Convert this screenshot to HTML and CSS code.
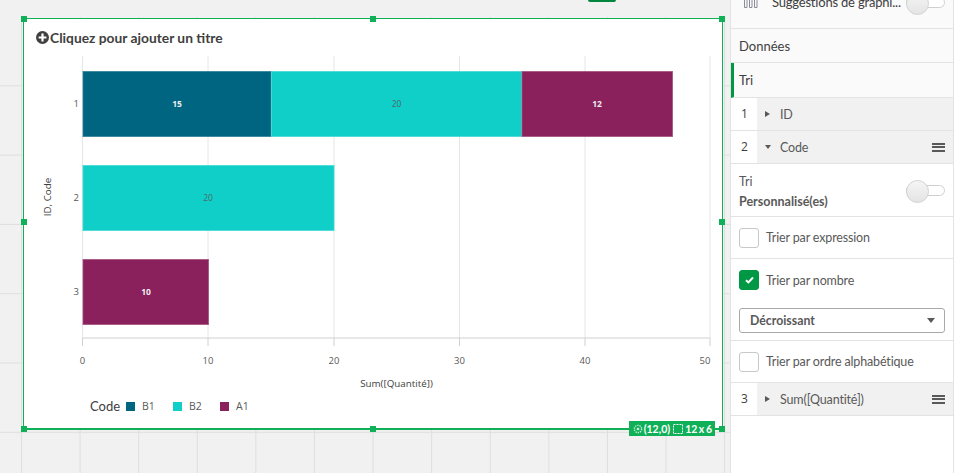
FILE: index.html
```html
<!DOCTYPE html>
<html lang="fr">

<head>
    <meta charset="UTF-8">
    <title>Tri</title>
    <link rel="stylesheet" href="styles.css">
</head>

<body>

    <main class="canvas">
        <div class="top-btn"></div>

        <section class="frame">
            <span class="handle h-tl"></span>
            <span class="handle h-tc"></span>
            <span class="handle h-tr"></span>
            <span class="handle h-ml"></span>
            <span class="handle h-mr"></span>
            <span class="handle h-bl"></span>
            <span class="handle h-bc"></span>
            <span class="handle h-br"></span>

            <h1 class="title">
                <svg class="title-icon" width="13" height="13" viewBox="0 0 13 13">
                    <circle cx="6.5" cy="6.5" r="6.5" fill="#404040" />
                    <path d="M5.4 2.6h2.2v2.8h2.8v2.2H7.6v2.8H5.4V7.6H2.6V5.4h2.8z" fill="#fff" />
                </svg>
                Cliquez pour ajouter un titre
            </h1>

            <svg class="plot" width="698" height="342" viewBox="24 50 698 342">
                <g class="grid-lines">
                    <path d="M82.5 56V338M208 56V338M334 56V338M459.500 56V338M585 56V338M710 56V338" />
                </g>

                <rect class="bar b1" x="83" y="71.500" width="188" height="65" />
                <rect class="bar b2" x="271.500" y="71.500" width="250" height="65" />
                <rect class="bar a1" x="522" y="71.500" width="150.500" height="65" />
                <rect class="bar b2" x="83" y="165.500" width="251" height="65" />
                <rect class="bar a1" x="83" y="259.500" width="125.500" height="65" />

                <text class="val light" x="177" y="107">15</text>
                <text class="val dark" x="396.500" y="107">20</text>
                <text class="val light" x="597" y="107">12</text>
                <text class="val dark" x="208" y="201">20</text>
                <text class="val light" x="146" y="295">10</text>

                <path class="axis" d="M82.500 338H710M82.500 338v8M208 338v8M334 338v8M459.500 338v8M585 338v8M710 338v8" />

                <text class="tick end" x="79" y="107">1</text>
                <text class="tick end" x="79" y="201">2</text>
                <text class="tick end" x="79" y="295">3</text>

                <text class="tick" x="82.500" y="364">0</text>
                <text class="tick" x="208" y="364">10</text>
                <text class="tick" x="334" y="364">20</text>
                <text class="tick" x="459.500" y="364">30</text>
                <text class="tick" x="585" y="364">40</text>
                <text class="tick" x="705" y="364">50</text>

                <text class="axis-title" x="396.500" y="387">Sum([Quantité])</text>
                <text class="axis-title" transform="translate(51 197) rotate(-90)">ID, Code</text>
            </svg>

            <div class="legend">
                <span class="legend-title">Code</span>
                <span class="legend-item"><i class="swatch b1"></i>B1</span>
                <span class="legend-item"><i class="swatch b2"></i>B2</span>
                <span class="legend-item"><i class="swatch a1"></i>A1</span>
            </div>

            <div class="badge">
                <svg class="badge-pos" width="10" height="10" viewBox="0 0 11 11">
                    <circle cx="5.500" cy="5.500" r="4" fill="none" stroke="#cdeedb" stroke-width="1.500" stroke-dasharray="1.500 1" />
                    <circle cx="5.500" cy="5.500" r="1.500" fill="#cdeedb" />
                </svg>
                <span>(12,0)</span>
                <svg class="badge-size" width="10" height="10" viewBox="0 0 10 10">
                    <rect x="0.500" y="0.500" width="9" height="9" fill="none" stroke="#fff" stroke-dasharray="2 1" />
                </svg>
                <span class="badge-dim">12 x 6</span>
            </div>
        </section>
    </main>

    <aside class="panel">
        <div class="suggest">
            <svg class="suggest-icon" width="16" height="10" viewBox="0 0 16 10">
                <path d="M1.500 0V8.500H4V0M6.500 0V8.500H9V0M11.500 0V8.500H14V0" fill="none" stroke="#8a8a9a" stroke-width="1" />
            </svg>
            <span class="suggest-text">Suggestions de graphi...</span>
            <span class="toggle"></span>
        </div>

        <div class="row-head">Données</div>
        <div class="row-head active">Tri</div>

        <div class="sort-row">
            <span class="num">1</span>
            <div class="sort-body"><i class="caret right"></i>ID</div>
        </div>
        <div class="sort-row">
            <span class="num">2</span>
            <div class="sort-body"><i class="caret down"></i>Code<span class="burger"></span></div>
        </div>

        <div class="option tri-opt">
            <div>
                <div class="tri-label">Tri</div>
                <div class="tri-value">Personnalisé(es)</div>
            </div>
            <span class="toggle"></span>
        </div>

        <div class="option check-opt">
            <span class="check"></span>Trier par expression
        </div>

        <div class="option number-opt">
            <div class="check-line">
                <span class="check on">
                    <svg width="9" height="8" viewBox="0 0 9 8">
                        <path d="M1 4.200L3.400 6.400L8 1.500" fill="none" stroke="#fff" stroke-width="2" />
                    </svg>
                </span>Trier par nombre
            </div>
            <div class="select">Décroissant<i class="caret down big"></i></div>
        </div>

        <div class="option check-opt">
            <span class="check"></span>Trier par ordre alphabétique
        </div>

        <div class="sort-row">
            <span class="num">3</span>
            <div class="sort-body"><i class="caret right"></i>Sum([Quantité])<span class="burger"></span></div>
        </div>
    </aside>

</body>

</html>
```

FILE: styles.css
```css
* {
    box-sizing: border-box;
    margin: 0;
    padding: 0;
}

html,
body {
    height: 100%;
    overflow: hidden;
}

body {
    display: grid;
    grid-template-columns: 730px 224px;
    height: 473px;
    background: #fff;
    font-family: Lato, "Open Sans", sans-serif;
    font-size: 13px;
    color: #404040;
}

.canvas {
    position: relative;
    padding: 18px 7px 0 23px;
    background-color: #f1f1f1;
}

/* the sheet grid, it only starts just above the object */
.canvas::before {
    content: '';
    position: absolute;
    top: 17px;
    left: 0;
    right: 0;
    bottom: 0;
    background-image:
        linear-gradient(to right, #dedede 1px, transparent 1px),
        linear-gradient(to top, #dedede 1px, transparent 1px);
    background-size: 58.6px 69.3px;
    background-position: 21px 0;
}

.top-btn {
    position: absolute;
    top: 0;
    left: 588px;
    width: 28px;
    height: 2px;
    background: #00873d;
    border-radius: 0 0 4px 4px;
}

.frame {
    position: relative;
    height: 412px;
    background: #fff;
    border: 1px solid #0fb057;
    border-bottom-width: 2px;
}

.handle {
    position: absolute;
    width: 6px;
    height: 6px;
    background: #0fb057;
}

.h-tl { top: -3px; left: -3px; }
.h-tc { top: -3px; left: 346px; }
.h-tr { top: -3px; right: -3px; }
.h-ml { top: 200px; left: -3px; }
.h-mr { top: 200px; right: -3px; }
.h-bl { bottom: -4px; left: -3px; }
.h-bc { bottom: -4px; left: 346px; }
.h-br { bottom: -4px; right: -3px; }

.title {
    display: flex;
    align-items: center;
    gap: 1px;
    height: 31px;
    padding: 5px 0 0 12px;
    font-size: 13.800px;
    font-weight: 700;
    color: #404040;
}

.plot {
    display: block;
}

.grid-lines path {
    stroke: #e6e6e6;
    fill: none;
}

.axis {
    stroke: #d0d0d0;
    fill: none;
}

.bar {
    stroke-width: 1;
    stroke-opacity: 0.75;
}

.bar.b1 { fill: #006580; stroke: #2a8097; }
.bar.b2 { fill: #10cfc9; stroke: #3fd8d3; }
.bar.a1 { fill: #8a205c; stroke: #a04c7c; }

.plot text {
    font-family: "Open Sans", sans-serif;
    text-anchor: middle;
}

.val {
    font-size: 8.500px;
}

.val.light {
    fill: #eee;
    font-weight: 700;
}

.val.dark {
    fill: #4a6a68;
}

.tick {
    font-size: 9.500px;
    fill: #595959;
}

.plot .tick.end {
    text-anchor: end;
}

.axis-title {
    font-size: 9.800px;
    fill: #404040;
}

.legend {
    display: flex;
    align-items: center;
    padding-left: 66px;
    height: 28px;
    color: #595959;
}

.legend-title {
    margin-right: 6px;
    font-size: 13px;
    color: #404040;
}

.legend-item {
    display: flex;
    align-items: center;
    width: 47px;
    font-family: "Open Sans", sans-serif;
    font-size: 10.500px;
}

.swatch {
    width: 9px;
    height: 9px;
    margin-right: 7px;
}

.swatch.b1 { background: #006580; }
.swatch.b2 { background: #10cfc9; }
.swatch.a1 { background: #8a205c; }

.badge {
    position: absolute;
    right: 7px;
    bottom: -8px;
    display: flex;
    align-items: center;
    height: 15px;
    padding: 0 3px 0 4px;
    background: #0fb057;
    color: #fff;
    font-size: 10.500px;
    font-weight: 700;
    word-spacing: -1px;
}

.badge-pos {
    margin-right: 1px;
}

.badge-size {
    margin: 0 2px 0 3px;
}

/* right side properties */
.panel {
    background: #fff;
    border-left: 1px solid #e3e3e3;
    border-right: 1px solid #e3e3e3;
}

.suggest {
    display: flex;
    align-items: flex-end;
    height: 29px;
    padding: 0 8px 19px 12px;
    overflow: hidden;
    background: #fafafa;
    border-bottom: 1px solid #e3e3e3;
}

.suggest-icon {
    flex: none;
    margin-right: 13px;
}

.suggest-text {
    flex: 1;
    min-width: 0;
    white-space: nowrap;
    font-size: 13px;
    letter-spacing: -0.200px;
    line-height: 18px;
    margin-bottom: -2px;
}

.suggest .toggle {
    margin-bottom: 1px;
}

.toggle {
    position: relative;
    flex: none;
    display: block;
    width: 39px;
    height: 11px;
    border: 1px solid #cfcfcf;
    border-radius: 6px;
    background: #fff;
}

.toggle::before {
    content: '';
    position: absolute;
    top: -6px;
    left: -1px;
    width: 21px;
    height: 21px;
    border-radius: 50%;
    border: 1px solid #d2d2d2;
    background: linear-gradient(#f5f5f5, #e4e4e4);
}

.row-head {
    display: flex;
    align-items: center;
    height: 34px;
    padding-left: 8px;
    background: #fafafa;
    border-bottom: 1px solid #e3e3e3;
}

.row-head.active {
    height: 35px;
    padding-left: 5px;
    border-left: 3px solid #009845;
}

.sort-row {
    display: flex;
    height: 33px;
    border-bottom: 1px solid #e3e3e3;
}

.num {
    width: 26px;
    padding-left: 10px;
    line-height: 32px;
    background: #fff;
    font-family: "Open Sans", sans-serif;
    font-size: 12px;
}

.sort-body {
    flex: 1;
    display: flex;
    align-items: center;
    padding: 0 8px;
    background: #f1f1f1;
    color: #595959;
    font-size: 12.500px;
    letter-spacing: -0.150px;
}

.caret {
    display: block;
    border-style: solid;
    border-color: transparent;
}

.caret.right {
    width: 0;
    margin-right: 10px;
    border-width: 3.500px 0 3.500px 5px;
    border-left-color: #595959;
}

.caret.down {
    width: 0;
    margin-right: 9px;
    border-width: 4px 3.500px 0;
    border-top-color: #595959;
}

.burger {
    width: 13px;
    height: 9px;
    margin-left: auto;
    border-top: 2px solid #595959;
    border-bottom: 2px solid #595959;
    position: relative;
}

.burger::after {
    content: '';
    position: absolute;
    left: 0;
    right: 0;
    top: 1.500px;
    height: 2px;
    background: #595959;
}

.option {
    border-bottom: 1px solid #e3e3e3;
}

.tri-opt {
    display: flex;
    align-items: center;
    justify-content: space-between;
    height: 53px;
    padding: 0 8px;
}

.tri-label {
    padding-top: 3px;
    line-height: 20px;
    font-size: 12.500px;
    color: #595959;
}

.tri-value {
    line-height: 20px;
    font-size: 12.500px;
    font-weight: 700;
    color: #595959;
}

.check-opt,
.check-line {
    display: flex;
    align-items: center;
    color: #595959;
    font-size: 12.500px;
    letter-spacing: -0.150px;
}

.check-opt {
    height: 42px;
    padding-left: 8px;
}

.number-opt {
    height: 82px;
    padding: 11px 8px 0;
}

.check {
    display: flex;
    align-items: center;
    justify-content: center;
    width: 20px;
    height: 20px;
    margin-right: 7px;
    border: 1px solid #c8c8c8;
    border-radius: 3px;
    background: #fff;
}

.check.on {
    background: #009845;
    border-color: #009845;
}

.select {
    display: flex;
    align-items: center;
    justify-content: space-between;
    height: 25px;
    margin-top: 18px;
    padding: 0 9px 0 10px;
    border: 1px solid #a9a9a9;
    border-radius: 3px;
    font-weight: 700;
    font-size: 12.300px;
    color: #595959;
}

.caret.big {
    margin-right: 0;
    border-width: 5px 4px 0;
}
```
